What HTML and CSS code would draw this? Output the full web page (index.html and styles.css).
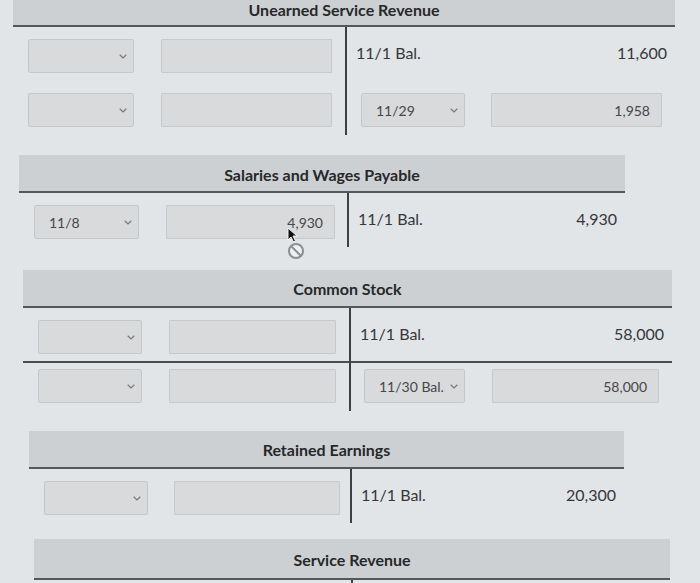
FILE: index.html
```html
<!DOCTYPE html>
<html lang="en">
<head>
<meta charset="utf-8">
<title>T-Accounts</title>
<link rel="stylesheet" href="styles.css">
</head>
<body>
<div class="page">

  <section class="acct acct-1">
    <div class="acct-head">Unearned Service Revenue</div>
    <div class="line">
      <div class="cell dr">
        <div class="sel"><span class="sel-text"></span><svg class="chev" viewBox="0 0 8 5"><path d="M0.7 0.8 L4 4 L7.3 0.8"/></svg></div>
        <div class="inp"></div>
      </div>
      <div class="cell cr text-cell"><span>11/1 Bal.</span><span>11,600</span></div>
    </div>
    <div class="line">
      <div class="cell dr">
        <div class="sel"><span class="sel-text"></span><svg class="chev" viewBox="0 0 8 5"><path d="M0.7 0.8 L4 4 L7.3 0.8"/></svg></div>
        <div class="inp"></div>
      </div>
      <div class="cell cr">
        <div class="sel"><span class="sel-text">11/29</span><svg class="chev" viewBox="0 0 8 5"><path d="M0.7 0.8 L4 4 L7.3 0.8"/></svg></div>
        <div class="inp">1,958</div>
      </div>
    </div>
  </section>

  <section class="acct acct-2">
    <div class="acct-head">Salaries and Wages Payable</div>
    <div class="line">
      <div class="cell dr">
        <div class="sel"><span class="sel-text">11/8</span><svg class="chev" viewBox="0 0 8 5"><path d="M0.7 0.8 L4 4 L7.3 0.8"/></svg></div>
        <div class="inp">4,930</div>
      </div>
      <div class="cell cr text-cell"><span>11/1 Bal.</span><span>4,930</span></div>
    </div>
  </section>

  <section class="acct acct-3">
    <div class="acct-head">Common Stock</div>
    <div class="line sep">
      <div class="cell dr">
        <div class="sel"><span class="sel-text"></span><svg class="chev" viewBox="0 0 8 5"><path d="M0.7 0.8 L4 4 L7.3 0.8"/></svg></div>
        <div class="inp"></div>
      </div>
      <div class="cell cr text-cell"><span>11/1 Bal.</span><span>58,000</span></div>
    </div>
    <div class="line after-sep">
      <div class="cell dr">
        <div class="sel"><span class="sel-text"></span><svg class="chev" viewBox="0 0 8 5"><path d="M0.7 0.8 L4 4 L7.3 0.8"/></svg></div>
        <div class="inp"></div>
      </div>
      <div class="cell cr">
        <div class="sel"><span class="sel-text">11/30 Bal.</span><svg class="chev" viewBox="0 0 8 5"><path d="M0.7 0.8 L4 4 L7.3 0.8"/></svg></div>
        <div class="inp">58,000</div>
      </div>
    </div>
  </section>

  <section class="acct acct-4">
    <div class="acct-head">Retained Earnings</div>
    <div class="line">
      <div class="cell dr">
        <div class="sel"><span class="sel-text"></span><svg class="chev" viewBox="0 0 8 5"><path d="M0.7 0.8 L4 4 L7.3 0.8"/></svg></div>
        <div class="inp"></div>
      </div>
      <div class="cell cr text-cell"><span>11/1 Bal.</span><span>20,300</span></div>
    </div>
  </section>

  <section class="acct acct-5">
    <div class="acct-head">Service Revenue</div>
    <div class="line">
      <div class="cell dr"></div>
      <div class="cell cr"></div>
    </div>
  </section>

  <svg class="cursor" width="24" height="34" viewBox="0 0 24 34">
    <path d="M2 1 L2 13 L5 10 L7.5 15 L9.5 14 L7 9 L11 9 Z" fill="#111" stroke="#f4f4f4" stroke-width="1"/>
    <circle cx="10" cy="24" r="7" fill="#eef0f1" stroke="#8c8f92" stroke-width="2"/>
    <line x1="5.5" y1="19.5" x2="14.5" y2="28.5" stroke="#8c8f92" stroke-width="2"/>
  </svg>

</div>
</body>
</html>
```

FILE: styles.css
```css
* {
  box-sizing: border-box;
}

html, body {
  margin: 0;
  padding: 0;
}

body {
  background: #e2e5e8;
  font-family: Lato, "Open Sans", "Liberation Sans", sans-serif;
  color: #333537;
  width: 700px;
  height: 583px;
  overflow: hidden;
}

.page {
  position: relative;
  width: 700px;
  height: 583px;
  overflow: hidden;
}

/* ---------- account block ---------- */
.acct {
  --l: 330px;
  --sw: 105px;
  --iw: 170px;
  --gap: 27px;
  --rsw: 104px;
  --riw: 171px;
  --rgap: 26px;
  --rpad: 15px;
}

.acct-head {
  height: 38px;
  background: #cdd0d2;
  border-bottom: 2px solid #55585b;
  display: flex;
  align-items: center;
  justify-content: center;
  font-weight: 700;
  font-size: 16px;
  color: #26282a;
}

.line {
  display: grid;
  grid-template-columns: var(--l) 1fr;
}

.cell {
  padding-top: 12px;
  padding-bottom: 8px;
  display: flex;
  align-items: center;
  min-height: 54px;
}

.cell.dr {
  border-right: 2px solid #3d3f41;
  padding-left: 15px;
  gap: var(--gap);
}

.cell.cr {
  padding-left: var(--rpad);
  gap: var(--rgap);
}

.cell.text-cell {
  padding-left: 9px;
  padding-right: 8px;
  padding-bottom: 14px;
  padding-top: 11px;
  justify-content: space-between;
  font-size: 16px;
  color: #35373a;
}

.line.sep .cell {
  border-bottom: 2px solid #4a4d50;
  padding-bottom: 7px;
  min-height: 55px;
}

.line.sep .cell.text-cell {
  padding-bottom: 12px;
  padding-top: 10px;
}

.line.after-sep .cell {
  padding-top: 6px;
  min-height: 48px;
}

/* ---------- controls ---------- */
.sel {
  width: var(--sw);
  height: 34px;
  background: #d8dadc;
  border: 1px solid #c4c7c9;
  border-radius: 2px;
  display: flex;
  align-items: center;
  justify-content: space-between;
  padding: 0 6px 0 14px;
  font-size: 14px;
  color: #45474a;
  flex: none;
}

.cell.cr .sel {
  width: var(--rsw);
}

.chev {
  width: 8px;
  height: 5px;
  fill: none;
  stroke: #77797c;
  stroke-width: 1.2;
}

.inp {
  width: var(--iw);
  height: 34px;
  background: #d8dadc;
  border: 1px solid #c6c9cb;
  border-radius: 1px;
  display: flex;
  align-items: center;
  justify-content: flex-end;
  padding-right: 11px;
  font-size: 14px;
  color: #45474a;
  flex: none;
}

.cell.cr .inp {
  width: var(--riw);
}

/* ---------- per-account geometry (photo perspective) ---------- */
.acct-1 {
  margin-top: -11px;
  margin-left: 13px;
  width: 662px;
  --l: 334px;
  --sw: 106px;
  --iw: 171px;
  --gap: 27px;
  --rsw: 104px;
  --riw: 171px;
  --rgap: 26px;
  --rpad: 14px;
}

.acct-1 .acct-head {
  padding-top: 4px;
}

.acct-2 {
  margin-top: 20px;
  margin-left: 19px;
  width: 606px;
  --l: 330px;
  --sw: 105px;
  --iw: 169px;
  --gap: 27px;
}

.acct-2 .acct-head {
  padding-top: 3px;
}

.acct-3 {
  margin-top: 23px;
  margin-left: 23px;
  width: 649px;
  --l: 328px;
  --sw: 104px;
  --iw: 167px;
  --gap: 27px;
  --rsw: 101px;
  --riw: 167px;
  --rgap: 27px;
  --rpad: 13px;
}

.acct-4 {
  margin-top: 20px;
  margin-left: 29px;
  width: 595px;
  --l: 323px;
  --sw: 104px;
  --iw: 166px;
  --gap: 26px;
}

.acct-5 {
  margin-top: 16px;
  margin-left: 34px;
  width: 636px;
  --l: 319px;
}

.acct-5 .acct-head {
  height: 41px;
  padding-top: 2px;
}

/* ---------- mouse cursor overlay ---------- */
.cursor {
  position: absolute;
  left: 286px;
  top: 227px;
}
```
